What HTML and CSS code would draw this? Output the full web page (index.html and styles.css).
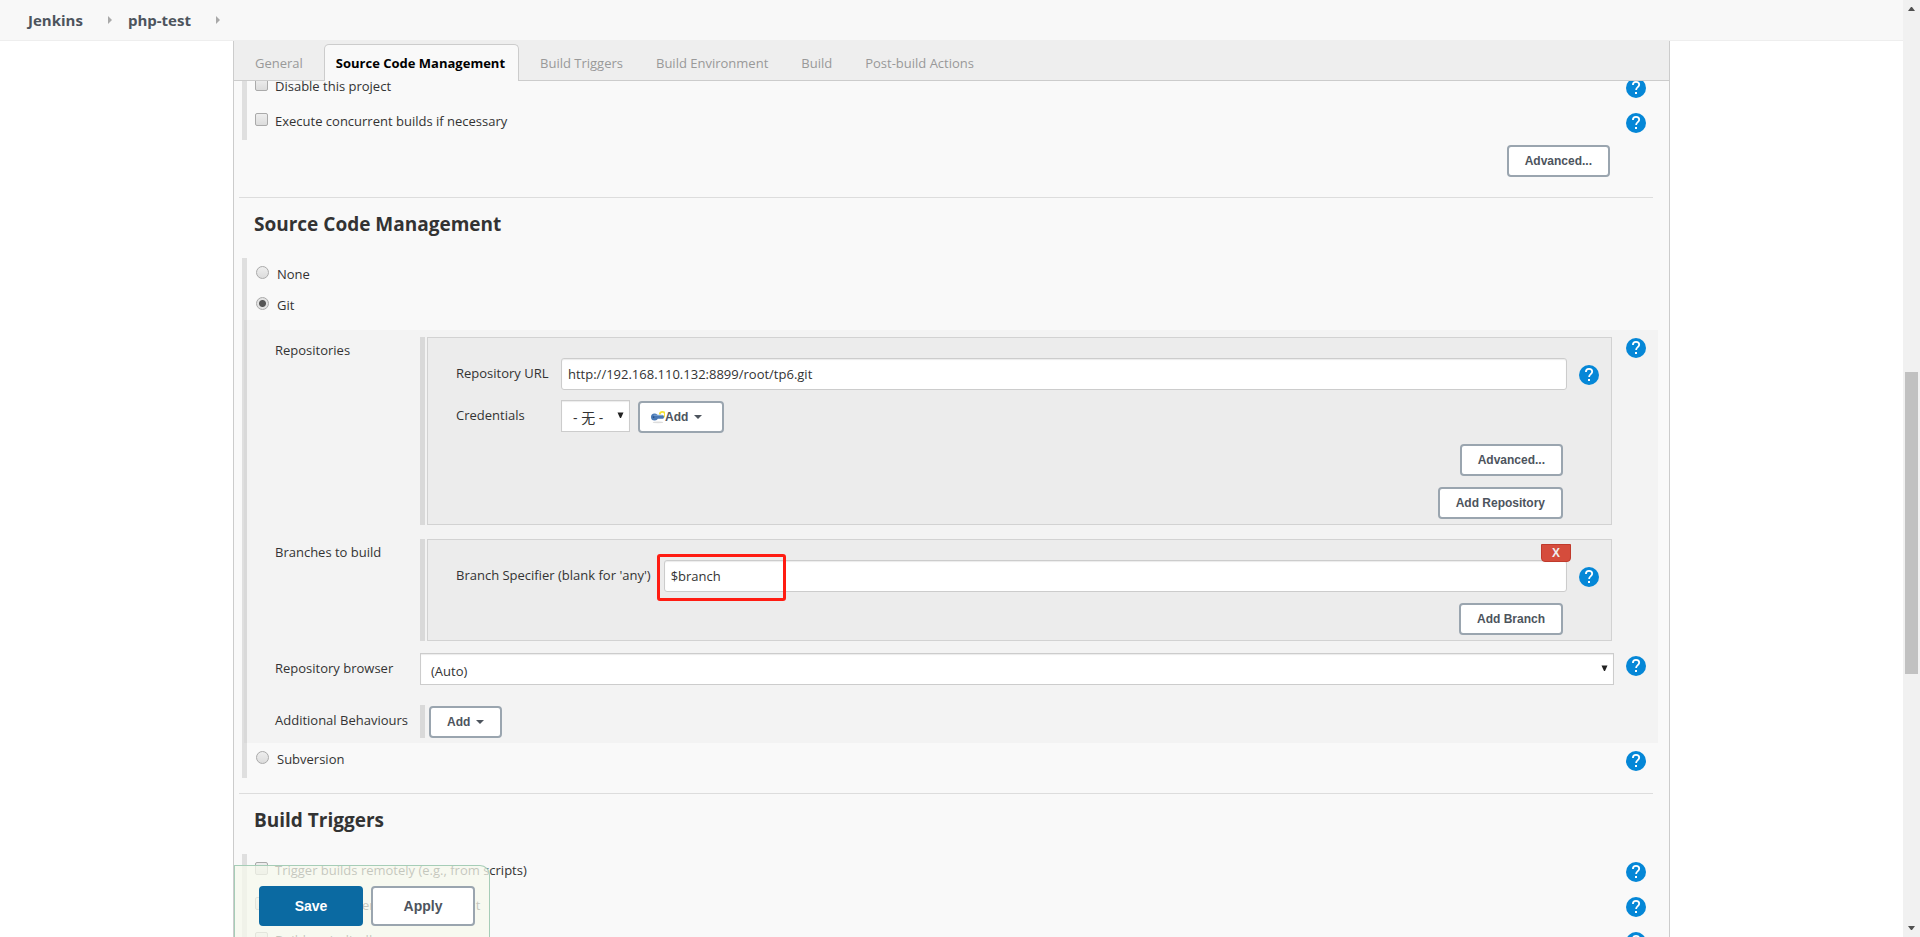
FILE: index.html
```html
<!DOCTYPE html>
<html lang="en">
<head>
<meta charset="utf-8">
<title>php-test Config [Jenkins]</title>
<link rel="stylesheet" href="styles.css">
</head>
<body>
<svg class="defs" aria-hidden="true">
  <symbol id="help" viewBox="0 0 20 20">
    <circle cx="10" cy="10" r="10" fill="#0587d7"/>
    <path d="M6.9 7.1C6.9 5 8.2 3.9 10 3.9s3.2 1.1 3.2 2.8c0 2.3-3.1 2.5-3.1 5.2" fill="none" stroke="#fff" stroke-width="1.8"/>
    <path d="M9 14h2v2H9z" fill="#fff"/>
  </symbol>
  <symbol id="caret" viewBox="0 0 8 4"><path d="M0 0h8L4 4z" fill="#4d545d"/></symbol>
  <symbol id="drop" viewBox="0 0 7 7"><path d="M0.5 0.5h6L4 6H3z" fill="#222"/></symbol>
  <symbol id="crumb" viewBox="0 0 4 8"><path d="M0 0l4 4-4 4z" fill="#a9a9a9"/></symbol>
</svg>
<div class="window">
  <div class="view">
    <nav class="crumbs">
      <a href="#">Jenkins</a><svg><use href="#crumb"/></svg>
      <a href="#">php-test</a><svg><use href="#crumb"/></svg>
    </nav>
    <main class="panel">
      <div class="tabs">
        <a href="#">General</a>
        <a href="#" class="active">Source Code Management</a>
        <a href="#">Build Triggers</a>
        <a href="#">Build Environment</a>
        <a href="#">Build</a>
        <a href="#">Post-build Actions</a>
      </div>
      <form class="config">
        <div class="group general">
          <div class="opt"><input type="checkbox" id="dis"><label for="dis">Disable this project</label><a href="#" class="help" aria-label="Help"><svg><use href="#help"/></svg></a></div>
          <div class="opt"><input type="checkbox" id="con"><label for="con">Execute concurrent builds if necessary</label><a href="#" class="help" aria-label="Help"><svg><use href="#help"/></svg></a></div>
        </div>
        <div class="general-actions"><button type="button" class="btn">Advanced...</button></div>

        <h2>Source Code Management</h2>
        <div class="group scm">
          <div class="opt radio"><input type="radio" name="scm" id="none"><label for="none">None</label></div>
          <div class="opt radio"><input type="radio" name="scm" id="git" checked><label for="git">Git</label></div>
          <div class="notch"></div>
          <div class="nested">
            <div class="field">
              <span class="name">Repositories</span>
              <div class="chunk">
                <div class="box">
                  <div class="entry">
                    <label class="key" for="url">Repository URL</label>
                    <input type="text" id="url" value="http://192.168.110.132:8899/root/tp6.git">
                    <a href="#" class="help" aria-label="Help"><svg><use href="#help"/></svg></a>
                  </div>
                  <div class="entry creds">
                    <label class="key" for="cred">Credentials</label>
                    <span class="select"><select id="cred"><option>- 无 -</option></select><svg><use href="#drop"/></svg></span>
                    <button type="button" class="btn add-key"><svg class="key-icon" viewBox="0 0 16 16"><ellipse cx="8" cy="14" rx="6" ry="1" fill="#ddd"/><path d="M10 5a3 3 0 1 1 3 3" fill="none" stroke="#f5e335" stroke-width="2"/><ellipse cx="4" cy="8" rx="4" ry="4" fill="#4a79b5"/><path d="M6 6h8l1 2-1 2H6z" fill="#4a79b5"/><path d="M3 6h10" stroke="#86abd8" stroke-width="1"/><circle cx="3" cy="8" r="1" fill="#254f86"/></svg>Add<svg class="caret"><use href="#caret"/></svg></button>
                  </div>
                  <div class="actions"><button type="button" class="btn">Advanced...</button></div>
                  <div class="actions"><button type="button" class="btn">Add Repository</button></div>
                </div>
              </div>
              <a href="#" class="help" aria-label="Help"><svg><use href="#help"/></svg></a>
            </div>
            <div class="field">
              <span class="name">Branches to build</span>
              <div class="chunk">
                <div class="box">
                  <button type="button" class="delete">X</button>
                  <div class="entry">
                    <label for="branch">Branch Specifier (blank for 'any')</label>
                    <span class="marked"><input type="text" id="branch" value="$branch"><span class="mark"></span></span>
                    <a href="#" class="help" aria-label="Help"><svg><use href="#help"/></svg></a>
                  </div>
                  <div class="actions"><button type="button" class="btn">Add Branch</button></div>
                </div>
              </div>
            </div>
            <div class="field browser">
              <label class="name" for="browser">Repository browser</label>
              <span class="select"><select id="browser"><option>(Auto)</option></select><svg><use href="#drop"/></svg></span>
              <a href="#" class="help" aria-label="Help"><svg><use href="#help"/></svg></a>
            </div>
            <div class="field extra">
              <span class="name">Additional Behaviours</span>
              <div class="chunk"><button type="button" class="btn">Add<svg class="caret"><use href="#caret"/></svg></button></div>
            </div>
          </div>
          <div class="opt radio svn"><input type="radio" name="scm" id="svn"><label for="svn">Subversion</label><a href="#" class="help" aria-label="Help"><svg><use href="#help"/></svg></a></div>
        </div>

        <h2 class="triggers-title">Build Triggers</h2>
        <div class="group triggers">
          <div class="opt"><input type="checkbox" id="t1"><label for="t1">Trigger builds remotely (e.g., from scripts)</label><a href="#" class="help" aria-label="Help"><svg><use href="#help"/></svg></a></div>
          <div class="opt"><input type="checkbox" id="t2"><label for="t2">Build after other projects are built</label><a href="#" class="help" aria-label="Help"><svg><use href="#help"/></svg></a></div>
          <div class="opt"><input type="checkbox" id="t3"><label for="t3">Build periodically</label><a href="#" class="help" aria-label="Help"><svg><use href="#help"/></svg></a></div>
        </div>
      </form>
      <div class="savebar">
        <button type="button" class="big primary">Save</button>
        <button type="button" class="big">Apply</button>
      </div>
    </main>
  </div>
  <div class="scroll" aria-hidden="true">
    <svg viewBox="0 0 7 4"><path d="M0 4h7L4 0H3z" fill="#505050"/></svg>
    <div class="track"><div class="thumb"></div></div>
    <svg viewBox="0 0 7 4"><path d="M0 0h7L4 4H3z" fill="#505050"/></svg>
  </div>
</div>
</body>
</html>
```
FILE: styles.css
```css
* { box-sizing: border-box; }
body {
  margin: 0;
  color: #333;
  font: 13px/20px "Open Sans", "Noto Sans", "Noto Sans CJK SC", sans-serif;
}
a { color: inherit; text-decoration: none; }
.defs { position: absolute; width: 0; height: 0; }
.window { display: flex; height: 100vh; overflow: hidden; background: #fff; }
.view { flex: 1; min-width: 0; display: flex; flex-direction: column; }

.crumbs {
  display: flex; align-items: center; flex: none;
  height: 41px; padding-left: 28px;
  background: #f8f8f8; border-bottom: 1px solid #eee;
  color: #4d545d; font-size: 15px; font-weight: 700;
}
.crumbs svg { width: 4px; height: 8px; margin: 0 16px 0 25px; }

.panel {
  position: relative; flex: 1; min-height: 0;
  display: flex; flex-direction: column;
  margin: 0 233px; overflow: hidden;
  background: #f9f9f9; border: 1px solid #ccc; border-width: 0 1px;
}
.tabs {
  position: relative; z-index: 1; flex: none;
  display: flex; align-items: flex-end;
  height: 40px; padding-left: 9px;
  background: #eee; border-bottom: 1px solid #ccc;
  color: #999;
}
.tabs a { height: 37px; margin-bottom: -1px; padding: 8px 11px 0; border: 1px solid transparent; margin-right: 9px; }
.tabs .active {
  padding-right: 13px;
  color: #000; font-weight: 700; background: #f9f9f9;
  border-color: #ccc; border-bottom: 0; border-radius: 5px 5px 0 0;
}

.config { flex: 1; min-height: 0; overflow: hidden; }
.group { margin-left: 8px; border-left: 5px solid #dfdfdf; }
.general { margin-top: -5px; height: 64px; }
.opt { display: flex; align-items: flex-start; height: 35px; padding: 0 23px 0 8px; }
.opt label { margin-left: 7px; }
.opt .help { margin: 2px 0 0 auto; }
.opt.radio { height: 31px; padding-left: 9px; }
.opt.radio label { margin-left: 8px; }
.help { display: block; flex: none; width: 20px; height: 20px; }
.help svg { display: block; width: 20px; height: 20px; }

input[type="checkbox"], input[type="radio"] {
  appearance: none; flex: none;
  width: 13px; height: 13px; margin: 2px 0 0;
  background: linear-gradient(#eee, #dcdcdc);
  border: 1px solid #aaa; border-radius: 2px;
}
input[type="radio"] { border-radius: 50%; }
input[type="radio"]:checked { background: radial-gradient(circle, #555 0 3px, #e3e3e3 4px); }

.general-actions { display: flex; justify-content: flex-end; padding: 5px 59px 20px 0; }
h2 {
  margin: 0 16px 0 5px; padding: 16px 15px 0;
  height: 61px; border-top: 1px solid #ddd;
  font-size: 19px; line-height: 20px;
}
.scm { height: 520px; padding-top: 6px; }
.notch { width: 26px; height: 10px; margin: -6px 0 0 -3px; background: rgba(0, 0, 0, .025); }
.nested { margin: 0 11px 0 -3px; padding: 7px 12px 5px 0; background: rgba(0, 0, 0, .025); }
.field { display: grid; grid-template-columns: 176px minmax(0, 1fr) 20px; align-items: start; }
.field + .field { margin-top: 14px; }
.name { padding: 3px 0 0 31px; }
.chunk { margin-right: 14px; border-left: 5px solid #d9d9d9; padding-left: 2px; }
.box { position: relative; padding: 20px 44px 5px 28px; background: #ececec; border: 1px solid #d2d2d2; }
.field > .help { margin-top: 1px; }
.entry { display: flex; align-items: center; }
.entry .key { width: 105px; }
.entry label { margin-top: -3px; }
.entry > .help { margin: 1px -32px 0 12px; }
.creds { margin-top: 9px; }
.actions { display: flex; justify-content: flex-end; margin: 11px 4px 0 0; }
input[type="text"] {
  flex: 1; min-width: 0; width: 100%; height: 32px; padding: 0 6px;
  color: inherit; font: inherit;
  background: #fff; border: 1px solid #ccc; border-radius: 3px;
  box-shadow: inset 0 1px 1px rgba(0, 0, 0, .08);
}
.select { position: relative; display: block; }
.select select {
  display: block; appearance: none; width: 100%; height: 32px; padding: 4px 24px 0 11px;
  color: inherit; font: inherit;
  background: #fff; border: 1px solid #ccc; border-radius: 0;
  box-shadow: inset 0 1px 1px rgba(0, 0, 0, .08);
}
.select svg { position: absolute; top: 12px; right: 6px; width: 7px; height: 7px; }
.creds select { width: 69px; padding-right: 0; font-size: 14px; }

.btn {
  display: flex; align-items: center; height: 32px; padding: 0 16px;
  color: #4d545d; font: 700 12px/20px "Liberation Sans", Arial, sans-serif;
  background: #fff; border: 2px solid #9aa5af; border-radius: 4px;
}
.caret { width: 8px; height: 4px; margin-left: 6px; }
.add-key { margin: 2px 0 0 8px; padding: 0 20px 0 11px; }
.key-icon { width: 14px; height: 14px; }

.marked { position: relative; flex: 1; display: flex; margin-left: 13px; }
.mark {
  position: absolute; top: -6px; left: -7px; width: 129px; height: 47px;
  border: 3px solid #ff1c12; border-radius: 3px;
}
.delete {
  position: absolute; z-index: 1; top: 4px; right: 40px;
  width: 30px; height: 18px; padding: 0;
  color: #eee; font: 700 12px/16px "Liberation Sans", Arial, sans-serif;
  background: #d54c3c; border: 1px solid #c03a2c; border-radius: 0 0 4px 4px;
}
.field.browser { margin-top: 12px; }
.browser .select { margin-right: 12px; }
.browser .select select { padding-left: 10px; }
.browser .name { padding-top: 5px; }
.field.browser .help { margin-top: 3px; }
.field.extra { margin-top: 20px; }
.extra .name { padding-top: 5px; }
.extra .chunk { padding: 1px 0 0 4px; }
.svn { margin-top: 6px; }

.triggers-title { margin-top: 15px; }
.triggers { padding-top: 6px; }
.savebar {
  position: absolute; z-index: 2; left: 0; bottom: 0;
  display: flex; gap: 8px; padding: 20px 14px 11px 24px;
  background: rgba(245, 248, 236, .75);
  border: 1px solid #a6cdb7; border-bottom: 0; border-radius: 0 10px 0 0;
}
.big {
  width: 104px; height: 40px; color: #4d545d;
  font: 700 14px/20px "Liberation Sans", Arial, sans-serif;
  background: #fff; border: 2px solid #9aa5af; border-radius: 4px;
}
.primary { color: #fff; background: #0b6aa2; border-color: #0b6aa2; }

.scroll {
  flex: none; width: 17px; padding: 7px 0;
  display: flex; flex-direction: column; align-items: center;
  background: #f1f1f1;
}
.scroll svg { width: 7px; height: 4px; }
.track { flex: 1; width: 13px; padding-top: 361px; }
.thumb { height: 302px; background: #c1c1c1; }
```
